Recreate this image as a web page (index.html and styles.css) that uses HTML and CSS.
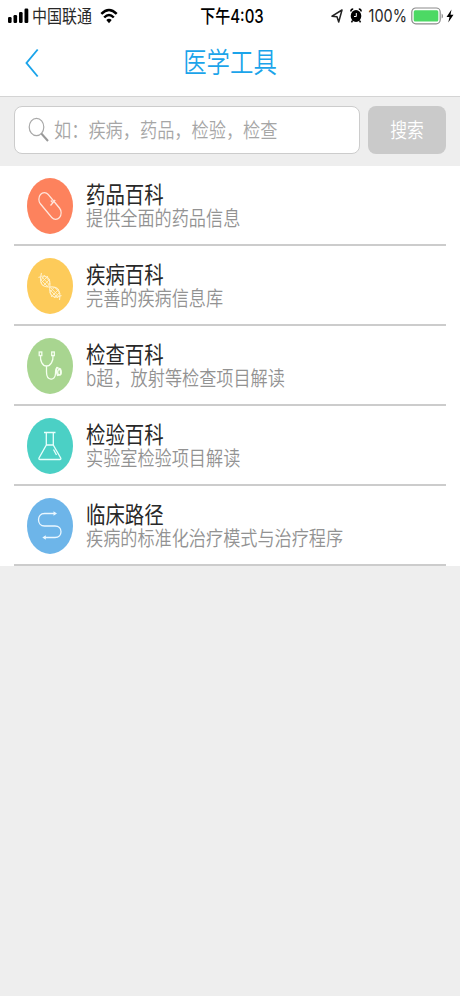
FILE: index.html
```html
<!DOCTYPE html>
<html lang="zh-CN">
<head>
<meta charset="utf-8">
<title>医学工具</title>
<link rel="stylesheet" href="styles.css">
</head>
<body>
<header class="top">
  <div class="status">
    <div class="status-left">
      <svg class="signal" width="22" height="16" viewBox="0 0 22 16"><rect x="0" y="9" width="3.6" height="6" rx="1.2"/><rect x="5.5" y="7" width="3.6" height="8" rx="1.2"/><rect x="11" y="4" width="3.6" height="11" rx="1.2"/><rect x="16.5" y="0.5" width="3.8" height="14.5" rx="1.2"/></svg>
      <span class="tall carrier">中国联通</span>
      <svg class="wifi" width="18" height="16" viewBox="0 0 18 16"><g fill="none" stroke="#000" stroke-width="2.5"><path d="M1.3 5.8Q9-2 16.700 5.800"/><path d="M4.200 9.500Q9 4.600 13.800 9.500"/></g><path d="M6.300 12Q9 9.400 11.700 12L9 15.200Z"/></svg>
    </div>
    <span class="tall time">下午4:03</span>
    <div class="status-right">
      <svg class="locate" width="12" height="14" viewBox="0 0 12 14"><path d="M1 7.200 11 1 7.700 13 6 7.800Z" fill="none" stroke="#222" stroke-width="1.500" stroke-linejoin="round"/></svg>
      <svg class="alarm" width="12" height="15" viewBox="0 0 12 15"><ellipse cx="6" cy="8" rx="5.300" ry="6"/><path d="M.8 3.500Q1 1 3.200 1M11.200 3.500Q11 1 8.800 1M2.500 12.500 1.500 14.400M9.500 12.500l1 1.900" fill="none" stroke="#000" stroke-width="1.500"/><path d="M6.300 5V8.500H4" fill="none" stroke="#fff" stroke-width="1"/></svg>
      <span class="tall percent">100%</span>
      <svg class="battery" width="33" height="18" viewBox="0 0 33 18"><rect x=".8" y="1" width="28.400" height="15.800" rx="4" fill="#fff" stroke="#8c8c8c" stroke-width="1.200"/><rect x="2.700" y="3.200" width="24.600" height="11.400" rx="1.500" fill="#4cd964"/><path d="M30.600 6.500Q32 7 32 9T30.600 11.500Z" fill="#8c8c8c"/></svg>
      <svg class="bolt" width="8" height="14" viewBox="0 0 8 14"><path d="M5.500.5.500 8H3.500L2.300 13.500 7.500 5.800H4.500Z"/></svg>
    </div>
  </div>
  <nav class="nav">
    <svg class="back" width="16" height="30" viewBox="0 0 16 30"><path d="M13.700 1.500 2.500 15 13.700 28.500" fill="none" stroke="#1ba4ea" stroke-width="1.900"/></svg>
    <h1 class="tall heading">医学工具</h1>
  </nav>
</header>
<section class="search">
  <div class="field">
    <svg class="lens" width="22" height="26" viewBox="0 0 22 26"><ellipse cx="8.500" cy="10" rx="7.300" ry="8.700" fill="none" stroke="#a8a8a8" stroke-width="1.200"/><path d="M13.300 16.500 20 24" stroke="#999" stroke-width="2"/></svg>
    <span class="tall hint">如：疾病，药品，检验，检查</span>
  </div>
  <div class="button"><span class="tall">搜索</span></div>
</section>
<main class="list">
  <article class="row">
    <svg class="badge" width="46" height="56" viewBox="0 0 46 56"><ellipse cx="23" cy="28" rx="23" ry="28" fill="#fd825d"/><g fill="none" stroke="#ffe6dc" stroke-width="1.200"><rect x="-5.500" y="-13.500" width="11" height="27" rx="5.500" transform="matrix(1 0 0 1.200 23 28) rotate(-45)"/><path d="M23.500 27.500 28.200 22M23.800 22.500 26 25"/></g></svg>
    <div class="copy"><h2 class="tall title">药品百科</h2><p class="tall note">提供全面的药品信息</p></div>
  </article>
  <article class="row">
    <svg class="badge" width="46" height="56" viewBox="0 0 46 56"><ellipse cx="23" cy="28" rx="23" ry="28" fill="#fdcb5a"/><g fill="none" stroke="#fff0c9" stroke-width="1.100"><path d="M14.500 15C12 24 14 29.500 22.800 29C31 28 34 33 32.500 42M11.500 19.500C19 15.500 24 20 22.800 29C22 37 26 42 34.500 37.500"/><path d="M14 22 21 29M15 19l7.500 8M18 18l5 6M23 21l-7 7M21 18l-7 7M18 17l-4 5M23 25l-3 4M23 32l8 8M23.500 29.500l9 9.500M28 29.500l5 6M32 31l-8 8M27 29.500l-4 5M33 34l-6 6" stroke-width=".9"/></g></svg>
    <div class="copy"><h2 class="tall title">疾病百科</h2><p class="tall note">完善的疾病信息库</p></div>
  </article>
  <article class="row">
    <svg class="badge" width="46" height="56" viewBox="0 0 46 56"><ellipse cx="23" cy="28" rx="23" ry="28" fill="#a8d590"/><g fill="none" stroke="#f5ffef" stroke-width="1.300"><path d="M13.500 17.500C13 23 15.500 28 19.500 28S26.500 23 26 17.500M19.500 28.500V34C19.500 43 28.300 43.500 28.500 35.500 28.500 30.500 29.200 29.800 31 29.500"/><rect x="12.200" y="14" width="2.600" height="3.600"/><rect x="24.700" y="14" width="2.600" height="3.600"/><path d="M30 29.500 33.500 31V36.500L30.500 37.500Q28.500 33 30 29.500Z"/><ellipse cx="32.500" cy="34.200" rx="1.800" ry="2.700"/></g></svg>
    <div class="copy"><h2 class="tall title">检查百科</h2><p class="tall note">b超，放射等检查项目解读</p></div>
  </article>
  <article class="row">
    <svg class="badge" width="46" height="56" viewBox="0 0 46 56"><ellipse cx="23" cy="28" rx="23" ry="28" fill="#4bd0c5"/><g fill="none" stroke="#e8fffc" stroke-width="1.300"><path d="M17 14.500H28.500M19.300 14.500V27L12 40Q11.500 41.500 13 41.500H32.800Q34.300 41.500 33.700 40L26.300 27V14.500M19.300 27H26.300"/><path d="M26.500 31.500 29.500 37"/></g></svg>
    <div class="copy"><h2 class="tall title">检验百科</h2><p class="tall note">实验室检验项目解读</p></div>
  </article>
  <article class="row">
    <svg class="badge" width="46" height="56" viewBox="0 0 46 56"><ellipse cx="23" cy="28" rx="23" ry="28" fill="#6db5e9"/><path d="M27 15.500H17.500C9.500 15.500 9.500 28 17.500 28H28C36 28 36 39.500 28 39.500H18" fill="none" stroke="#eaf7ff" stroke-width="1.300"/><path d="M26.500 13.300 30 15.500 26.500 17.700ZM18.800 37.300 15.300 39.500 18.800 41.700Z" fill="#eaf7ff"/></svg>
    <div class="copy"><h2 class="tall title">临床路径</h2><p class="tall note">疾病的标准化治疗模式与治疗程序</p></div>
  </article>
</main>
</body>
</html>
```
FILE: styles.css
```css
* { box-sizing: border-box; }
body {
  margin: 0;
  min-height: 996px;
  background: #eee;
  font-family: Inter, "Noto Sans CJK SC", sans-serif;
  color: #282828;
}
svg { display: block; flex: none; }
h1, h2, p { margin: 0; font-weight: 400; }
.tall {
  display: block;
  white-space: nowrap;
  transform: scaleY(1.2);
}
.top {
  height: 97px;
  background: #fff;
  border-bottom: 1px solid #d4d4d4;
}
.status {
  display: grid;
  grid-template-columns: 1fr auto 1fr;
  align-items: center;
  height: 31px;
  padding: 0 6px 0 8px;
}
.status-left, .status-right { display: flex; align-items: center; }
.status-right { justify-content: flex-end; }
.carrier { margin-left: 2px; padding-top: 2px; font-size: 15px; line-height: 20px; }
.wifi { margin-left: 8px; }
.time {
  margin-left: 2px;
  padding-top: 2px;
  font-size: 15px;
  line-height: 20px;
  font-weight: 500;
  color: #000;
}
.locate { margin-right: -1px; }
.alarm { margin-left: 8px; }
.percent {
  margin-left: 7px;
  font-size: 14.5px;
  line-height: 20px;
}
.battery { margin-left: 4px; }
.bolt { margin-left: 2px; }
.nav {
  display: grid;
  grid-template-columns: 60px 1fr 60px;
  align-items: center;
  height: 64px;
}
.back { margin-left: 24px; }
.heading {
  text-align: center;
  font-size: 23.4px;
  line-height: 30px;
  font-weight: 350;
  color: #1ba4ea;
}
.search {
  display: flex;
  gap: 8px;
  height: 69px;
  padding: 9px 14px 12px;
}
.field {
  display: flex;
  flex: 1;
  align-items: center;
  padding-left: 13px;
  border: 1.5px solid #ccc;
  border-radius: 8px;
  background: #fff;
}
.hint {
  margin-left: 4px;
  padding-top: 1px;
  font-size: 17.2px;
  line-height: 24px;
  font-weight: 350;
  color: #a6a6a6;
}
.button {
  display: flex;
  align-items: center;
  justify-content: center;
  width: 78px;
  border-radius: 8px;
  background: #cacaca;
  color: #fff;
  font-size: 16.8px;
  font-weight: 350;
}
.list { background: #fff; }
.row {
  display: flex;
  height: 80px;
  margin: 0 14px;
  padding: 12px 0 0 13px;
  border-bottom: 2px solid #ccc;
}
.copy { margin-left: 13px; padding-top: 8px; }
.title { font-size: 19.4px; line-height: 19px; }
.note {
  margin-top: 4px;
  font-size: 17.15px;
  line-height: 19px;
  font-weight: 350;
  color: #929292;
}
```
